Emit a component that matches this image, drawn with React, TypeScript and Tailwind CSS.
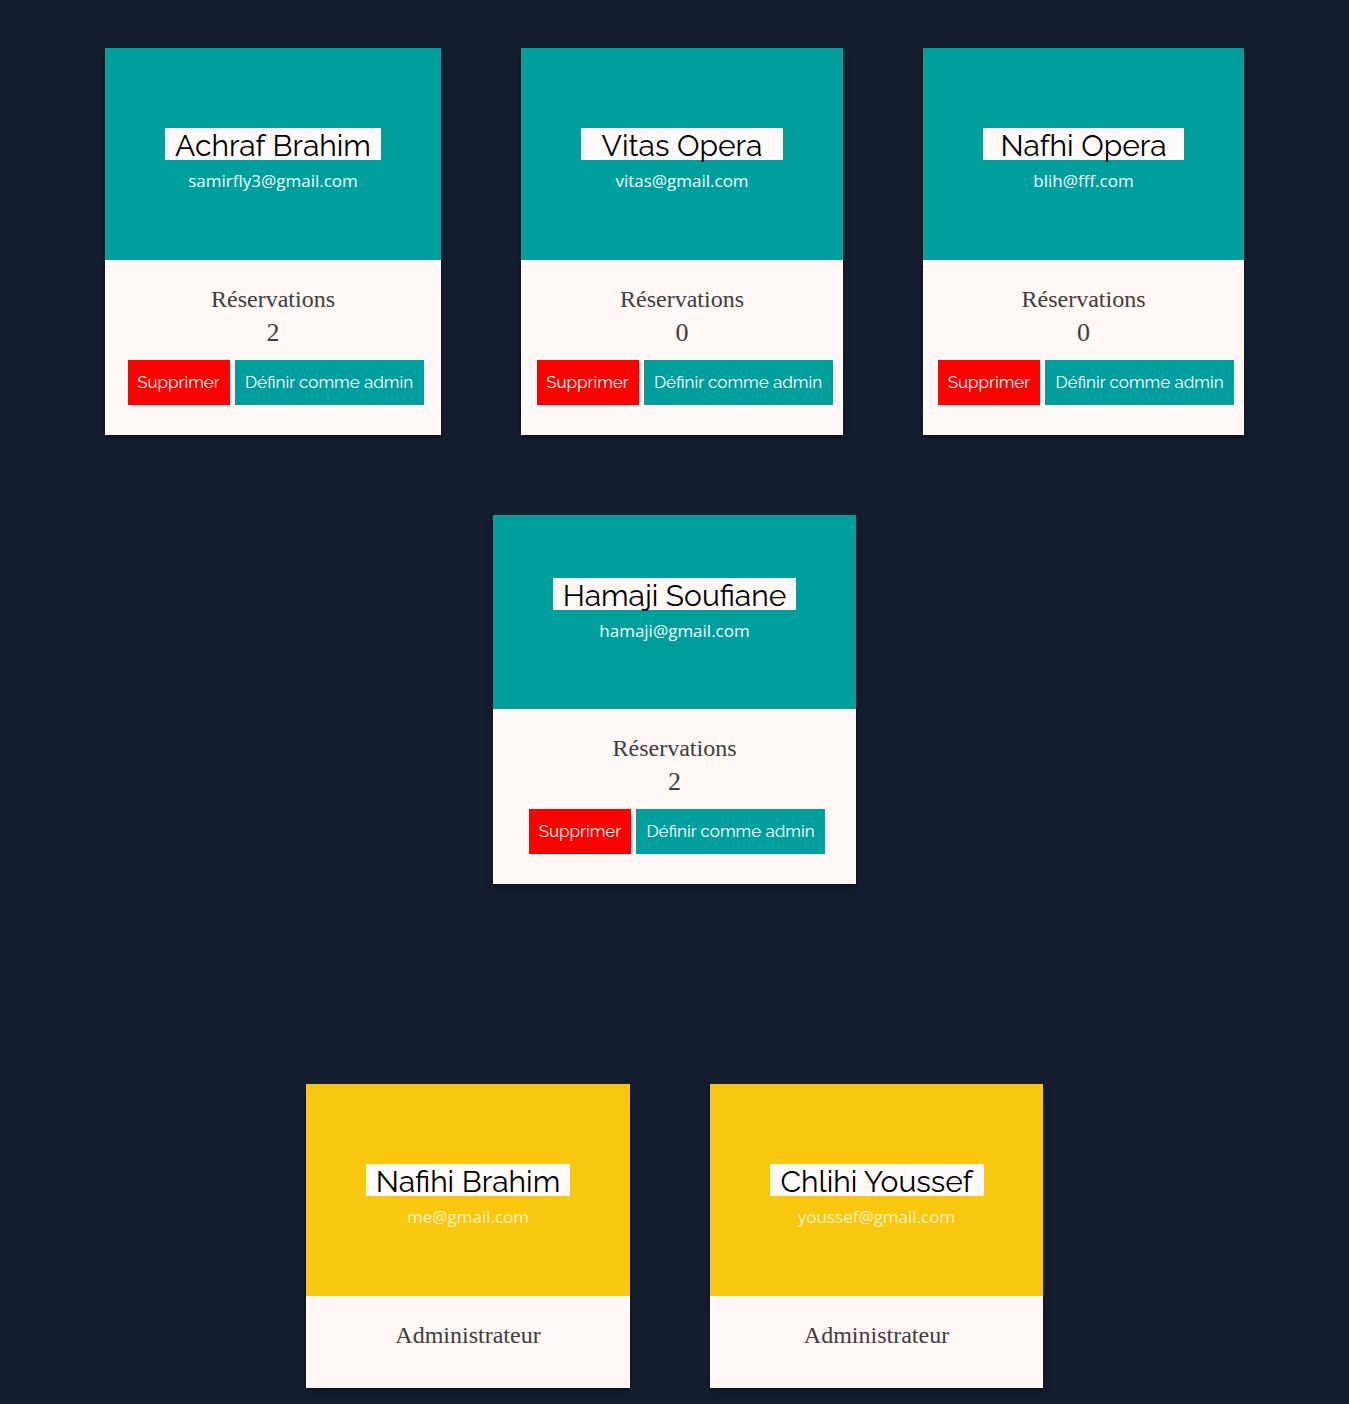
import React from "react";

type Member = {
  name: string;
  email: string;
  reservations?: number;
  width: number;
  nameWidth: number;
  headerH: number;
  nameTop: number;
};

const users: Member[] = [
  { name: "Achraf Brahim", email: "samirfly3@gmail.com", reservations: 2, width: 336, nameWidth: 216, headerH: 212, nameTop: 80 },
  { name: "Vitas Opera", email: "vitas@gmail.com", reservations: 0, width: 322, nameWidth: 202, headerH: 212, nameTop: 80 },
  { name: "Nafhi Opera", email: "blih@fff.com", reservations: 0, width: 321, nameWidth: 201, headerH: 212, nameTop: 80 },
  { name: "Hamaji Soufiane", email: "hamaji@gmail.com", reservations: 2, width: 363, nameWidth: 243, headerH: 194, nameTop: 63 },
];

const admins: Member[] = [
  { name: "Nafihi Brahim", email: "me@gmail.com", width: 324, nameWidth: 204, headerH: 212, nameTop: 80 },
  { name: "Chlihi Youssef", email: "youssef@gmail.com", width: 333, nameWidth: 214, headerH: 212, nameTop: 80 },
];

const sans = "font-['Raleway','Lato','Open_Sans',sans-serif]";

const Card: React.FC<{ m: Member; admin?: boolean }> = ({ m, admin }) => (
  <div className="shadow-[0_3px_6px_rgba(0,0,0,0.45)]" style={{ width: m.width }}>
    <div
      className={`flex flex-col items-center ${admin ? "bg-[#f9c80e]" : "bg-[#009e9c]"}`}
      style={{ height: m.headerH, paddingTop: m.nameTop }}
    >
      <div
        className={`bg-[#fffafa] text-black text-center text-[30px] leading-[32px] pt-[2px] h-[32px] ${sans}`}
        style={{ width: m.nameWidth }}
      >
        {m.name}
      </div>
      <div
        className={`mt-[5px] text-[17px] leading-[32px] font-['Open_Sans',sans-serif] ${
          admin ? "text-[#fdf1c6]" : "text-[#f2fffe]"
        }`}
      >
        {m.email}
      </div>
    </div>
    {admin ? (
      <div className="bg-[#fff8f6] pt-[26px] pb-[40px] text-center font-['Liberation_Serif',serif] text-[24px] leading-[26px] text-[#3d3d3d]">
        Administrateur
      </div>
    ) : (
      <div className="bg-[#fff8f6] pt-[26px] pb-[30px] text-center font-['Liberation_Serif',serif] text-[#3d3d3d]">
        <div className="text-[24px] leading-[26px]">Réservations</div>
        <div className="mt-[8px] text-[26px] leading-[26px]">{m.reservations}</div>
        <div className={`mt-[14px] ml-[5px] flex justify-center gap-[5px] text-[17px] text-white ${sans}`}>
          <button className="h-[45px] w-[102px] bg-[#ff0000]">Supprimer</button>
          <button className="h-[45px] w-[189px] bg-[#009e9c]">Définir comme admin</button>
        </div>
      </div>
    )}
  </div>
);

export default function App() {
  return (
    <div className="min-h-screen bg-[#151e31] pt-12 pb-4">
      <div className="flex flex-wrap justify-center gap-20">
        {users.map((u) => (
          <Card key={u.email} m={u} />
        ))}
      </div>
      <div className="mt-[200px] flex flex-wrap justify-center gap-20">
        {admins.map((a) => (
          <Card key={a.email} m={a} admin />
        ))}
      </div>
    </div>
  );
}
